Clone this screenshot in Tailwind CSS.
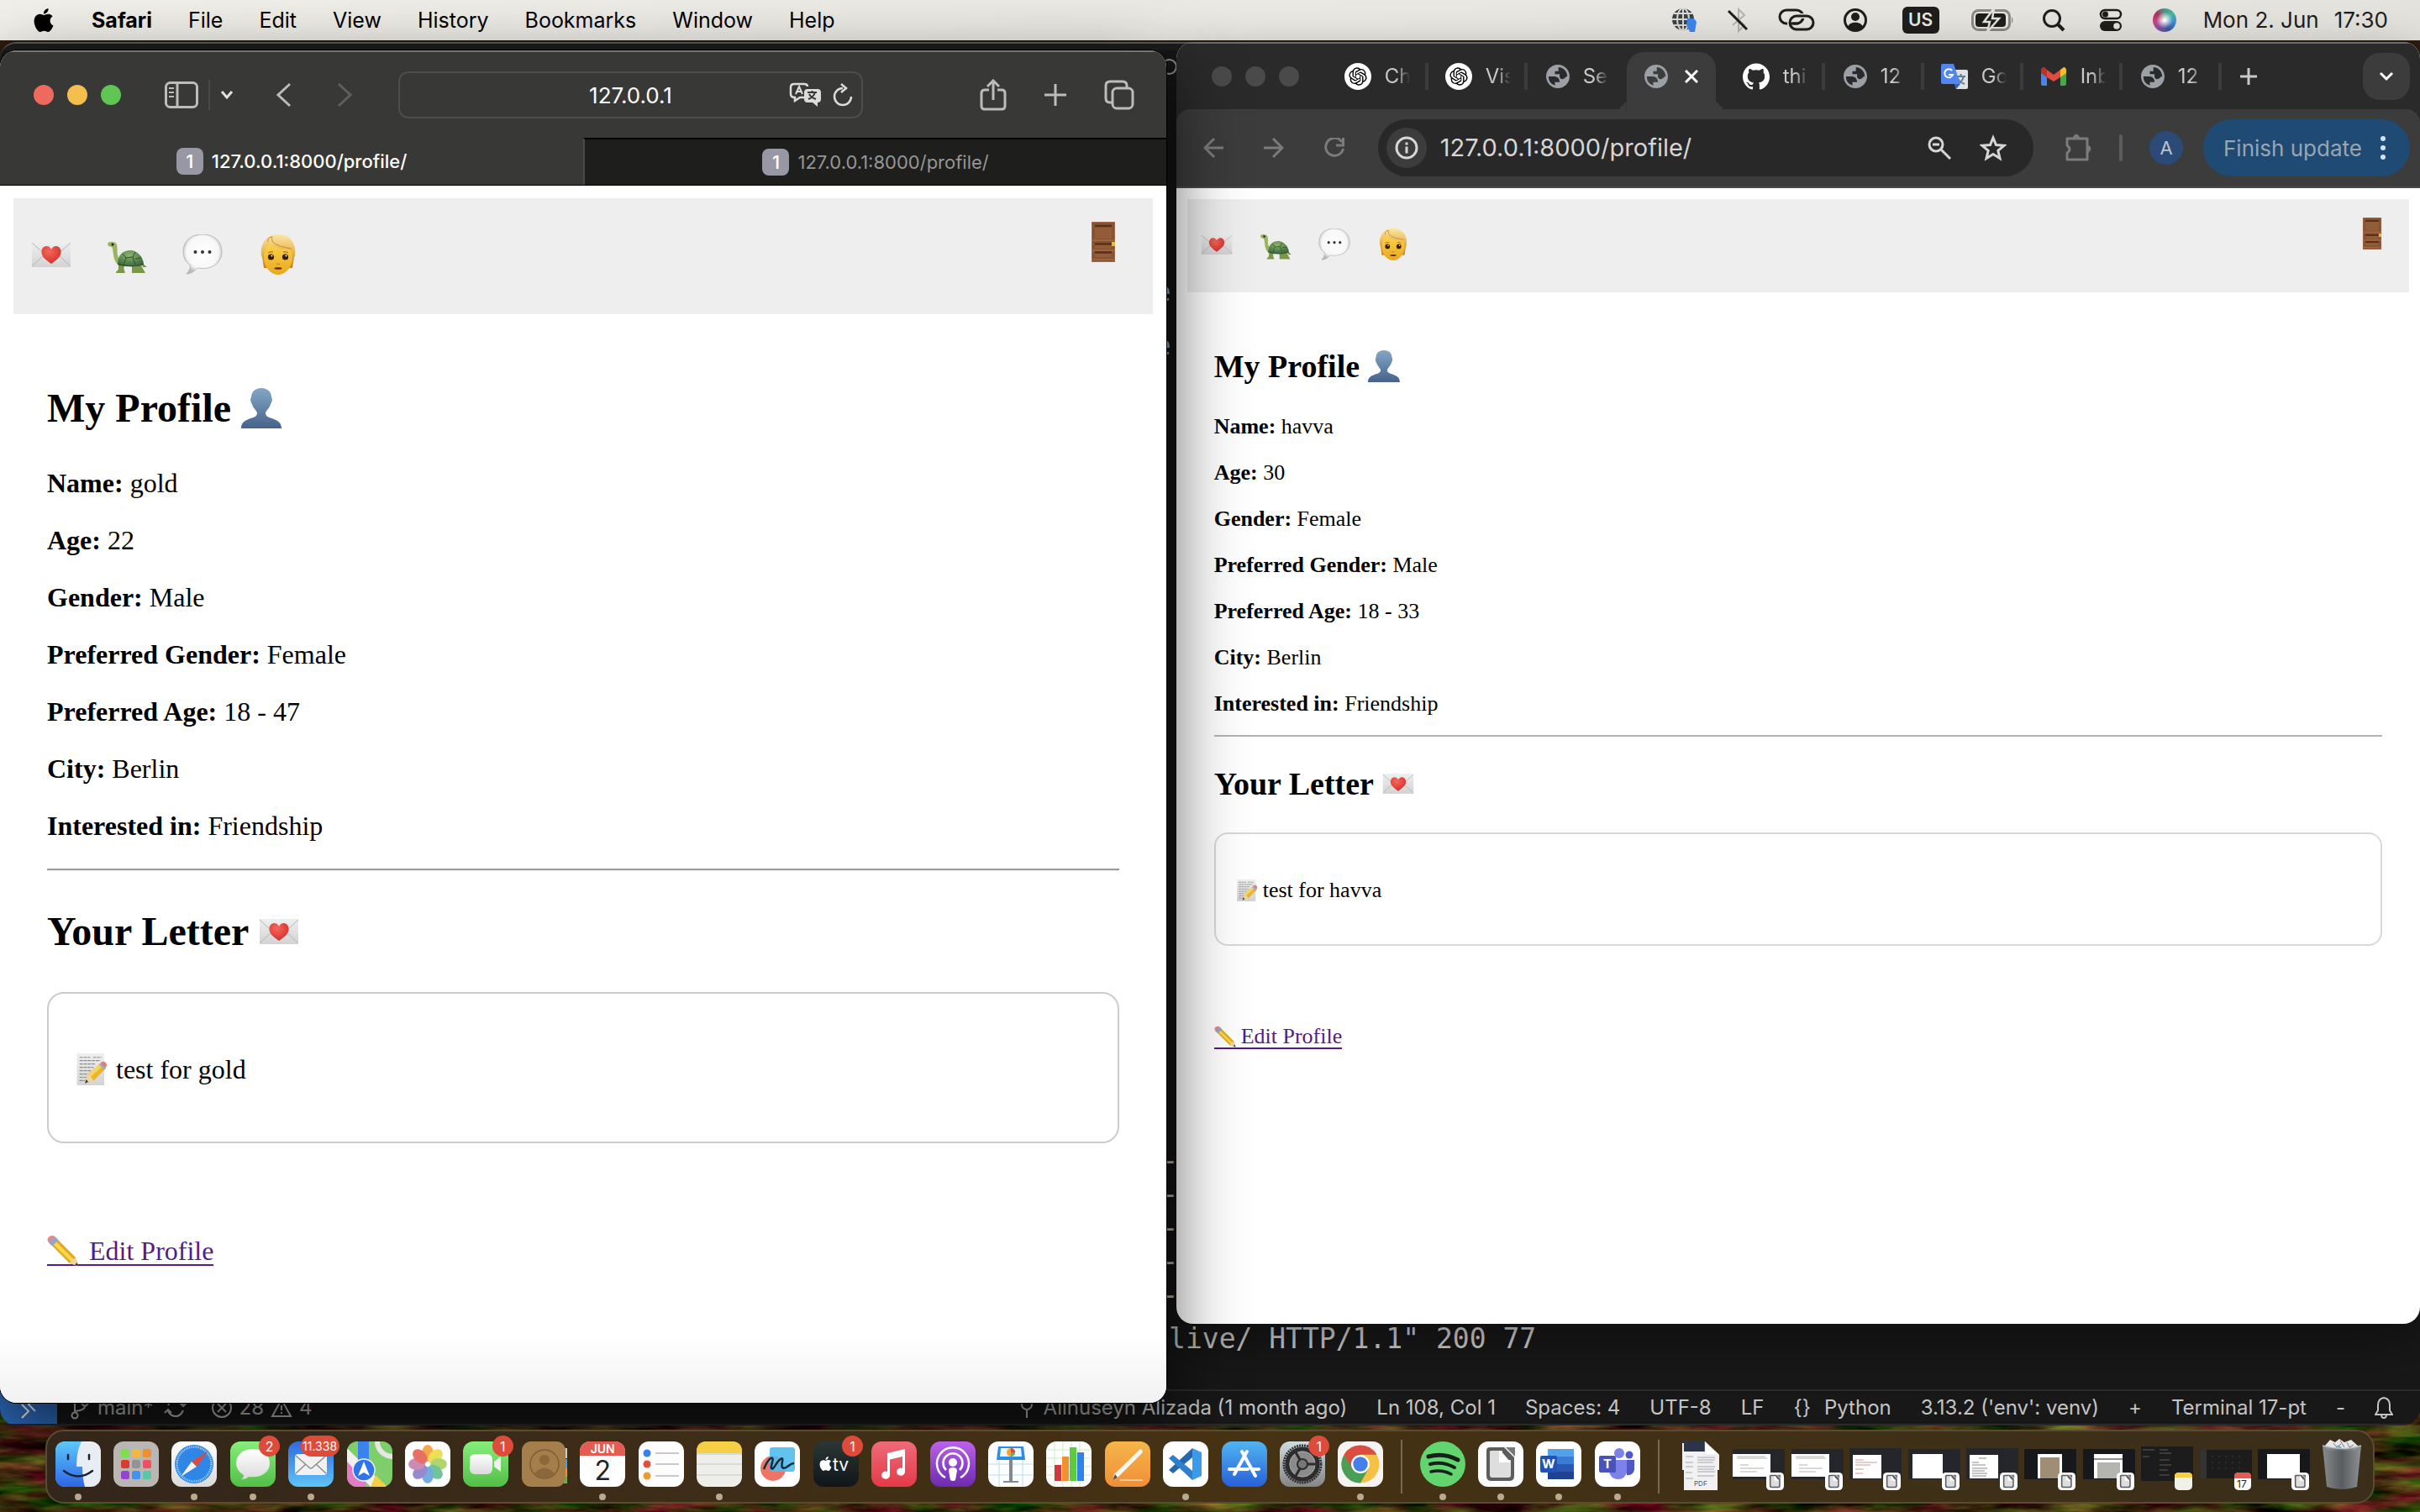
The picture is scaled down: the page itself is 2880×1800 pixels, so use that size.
<!DOCTYPE html>
<html lang="en">
<head>
<meta charset="utf-8">
<meta name="viewport" content="width=device-width, initial-scale=1">
<title>Desktop</title>
<script src="https://cdn.jsdelivr.net/npm/@tailwindcss/browser@4"></script>
</head>
<body class="bg-[#2b1d0e] font-[Inter,sans-serif]">

<svg class="absolute size-0" aria-hidden="true">
  <defs>
    <linearGradient id="g-paper" x1="0" y1="0" x2="0" y2="1"><stop offset="0" stop-color="#efefef"/><stop offset="1" stop-color="#d3d3d3"/></linearGradient>
    <radialGradient id="g-heart" cx=".4" cy=".3" r=".8"><stop offset="0" stop-color="#f5675a"/><stop offset="1" stop-color="#cf2a25"/></radialGradient>
    <radialGradient id="g-shell" cx=".45" cy=".3" r=".8"><stop offset="0" stop-color="#8db46c"/><stop offset="1" stop-color="#2f5c35"/></radialGradient>
    <radialGradient id="g-bubble" cx=".5" cy=".45" r=".55"><stop offset="0" stop-color="#fff"/><stop offset=".75" stop-color="#f7f7f7"/><stop offset="1" stop-color="#b9b9b9"/></radialGradient>
    <linearGradient id="g-face" x1="0" y1="0" x2="0" y2="1"><stop offset="0" stop-color="#fdd64c"/><stop offset="1" stop-color="#e9a81f"/></linearGradient>
    <linearGradient id="g-hair" x1="0" y1="0" x2="0" y2="1"><stop offset="0" stop-color="#fbe08a"/><stop offset="1" stop-color="#c97f16"/></linearGradient>
    <linearGradient id="g-fringe" x1="0" y1="0" x2="0" y2="1"><stop offset="0" stop-color="#fbe7a6"/><stop offset="1" stop-color="#e3a63a"/></linearGradient>
    <linearGradient id="g-bust" x1="0" y1="0" x2="0" y2="1"><stop offset="0" stop-color="#84a7c6"/><stop offset="1" stop-color="#46628a"/></linearGradient>
    <linearGradient id="g-green" x1="0" y1="0" x2="0" y2="1"><stop offset="0" stop-color="#86ee7b"/><stop offset="1" stop-color="#53bf47"/></linearGradient>
    <linearGradient id="g-mail" x1="0" y1="0" x2="0" y2="1"><stop offset="0" stop-color="#3069e0"/><stop offset="1" stop-color="#5fc4f8"/></linearGradient>
    <linearGradient id="g-finder" x1="0" y1="0" x2="0" y2="1"><stop offset="0" stop-color="#5cc8f9"/><stop offset="1" stop-color="#2f66e6"/></linearGradient>
    <linearGradient id="g-white" x1="0" y1="0" x2="0" y2="1"><stop offset="0" stop-color="#fff"/><stop offset="1" stop-color="#dadada"/></linearGradient>
    <linearGradient id="g-music" x1="0" y1="0" x2="0" y2="1"><stop offset="0" stop-color="#ef6a79"/><stop offset="1" stop-color="#e43a46"/></linearGradient>
    <linearGradient id="g-pod" x1="0" y1="0" x2="0" y2="1"><stop offset="0" stop-color="#bb62ea"/><stop offset="1" stop-color="#6d2bb0"/></linearGradient>
    <linearGradient id="g-pages" x1="0" y1="0" x2="0" y2="1"><stop offset="0" stop-color="#f6b54a"/><stop offset="1" stop-color="#ef8f36"/></linearGradient>
    <linearGradient id="g-store" x1="0" y1="0" x2="0" y2="1"><stop offset="0" stop-color="#51b5f2"/><stop offset="1" stop-color="#2860d8"/></linearGradient>
    <linearGradient id="g-gear" x1="0" y1="0" x2="0" y2="1"><stop offset="0" stop-color="#cfdbe2"/><stop offset="1" stop-color="#858585"/></linearGradient>
    <linearGradient id="g-trash" x1="0" y1="0" x2="1" y2="0"><stop offset="0" stop-color="#8d9296"/><stop offset=".5" stop-color="#5b6064"/><stop offset="1" stop-color="#94999d"/></linearGradient>
    <linearGradient id="g-tv" x1="0" y1="0" x2="0" y2="1"><stop offset="0" stop-color="#2b3735"/><stop offset="1" stop-color="#10151a"/></linearGradient>
    <filter id="grain" x="0" y="0" width="100%" height="100%" color-interpolation-filters="sRGB"><feTurbulence type="fractalNoise" baseFrequency=".012 .07" numOctaves="5" seed="7"/><feColorMatrix values=".9 0 0 0 -.22  .4 .7 0 0 -.38  .3 0 0 0 -.1  0 0 0 0 1"/></filter>

    <symbol id="e-letter" viewBox="0 0 48 48"><rect x="1" y="9" width="46" height="30" rx="1" fill="url(#g-paper)"/><path d="M1 38l16-15M47 38L31 23M1 10l19 17q4 3 8 0l19-17" fill="none" stroke="#b4b4b4"/><path d="M24 35C15 29 12 25 12.500 20c.8-7 9-8 11.500-2 2.500-6 10.700-5 11.500 2C36 25 33 29 24 35z" fill="url(#g-heart)"/></symbol>
    <symbol id="e-turtle" viewBox="0 0 48 48"><path d="M1 11c2-3 9-3 11 1 1 4 0 8 1 13l5 9-4 3C6 30 9 20 6 15c-2 0-5-1-5-4z" fill="#9bb45f"/><circle cx="7" cy="12" r="1.500" fill="#1c1c10"/><path d="M14 34l7 1-1 11h-9c0-3 3-2 3-6zM30 37h11l5 9H30zM42 34l6 5h-5zM20 40l2 6h-5z" fill="#7b9847"/><path d="M13 36C13 24 20 19 28 19s15 7 16 16c0 3-24 5-31 1z" fill="url(#g-shell)"/><path d="M20 36l3-8-4-5M23 28l8-1 3-6M31 27l3 9M34 29l7-1M13 35q16 5 31 1" fill="none" stroke="#2c5230" stroke-width="1"/></symbol>
    <symbol id="e-bubble" viewBox="0 0 48 48"><path d="M24 0C10 0 1 8 1 20c0 8 3 13 8 16 1 4-1 8-4 11 6 0 10-4 13-7l6 .6c14 0 23-8 23-20S38 0 24 0z" fill="url(#g-bubble)" stroke="#a9a9a9" stroke-width=".7"/><g fill="#333"><circle cx="15.500" cy="21" r="2"/><circle cx="24" cy="21" r="2"/><circle cx="32.500" cy="21" r="2"/></g></symbol>
    <symbol id="e-person" viewBox="0 0 48 48"><path d="M24 0C12 0 4 9 4 21l3 19h34l3-19C44 9 36 0 24 0z" fill="url(#g-hair)"/><path d="M24 8C13 8 7 15 7 27c0 12 8 21 17 21s17-9 17-21c0-12-6-19-17-19z" fill="url(#g-face)"/><path d="M4 26C2 8 13 0 24 0c14 0 22 10 20 27l-4-6c-1-2-3-3-6-3-10 0-18-3-22-9-1 6-4 7-5 13l-1 5z" fill="url(#g-fringe)"/><path d="M12 9q-1-6 5-6-4 10 23 14" fill="none" stroke="#c98a1c" stroke-width="1"/><circle cx="15.500" cy="27" r="3.600" fill="#3a1d08"/><circle cx="32.500" cy="27" r="3.600" fill="#3a1d08"/><circle cx="16.500" cy="25.500" r="1" fill="#fff"/><circle cx="33.500" cy="25.500" r="1" fill="#fff"/><path d="M12 22q3-2 6-1M30 21q3-1 6 1" stroke="#9c6515" fill="none"/><path d="M22 35q2 1 4 0" stroke="#b97a14" fill="none"/><ellipse cx="24" cy="40.500" rx="4.500" ry="1.300" fill="#5e2a10"/></symbol>
    <symbol id="e-door" viewBox="0 0 48 48"><rect x="10" width="28" height="48" fill="#a3694a"/><rect x="11" y="1" width="26" height="46" fill="#87522f"/><path d="M14 4h20v16H14zM14 26h20v6H14zM14 36h20v6H14z" fill="#935c39"/><path d="M14 5h20M14 26.500h20M14 36.500h20" stroke="#55301b" stroke-width="2.500"/><path d="M11 22h26M11 34h26M11 45h26" stroke="#a56a48" stroke-width="1.500"/><path d="M34 24h4v5h-4z" fill="#e0bf3e"/></symbol>
    <symbol id="e-bust" viewBox="0 0 48 48"><path d="M24 0c-8 0-12 5-12 11-2 2 0 7 1 8 1 5 6 8 6 11 0 8-19 4-19 18h48c0-14-19-10-19-18 0-3 5-6 6-11 1-1 3-6 1-8C36 5 32 0 24 0z" fill="url(#g-bust)"/></symbol>
    <symbol id="e-memo" viewBox="0 0 48 48"><rect x="2" y="0" width="41" height="48" fill="url(#g-paper)"/><path d="M6 6h16M26 6h13M6 11h31M6 16h24M6 21h21M6 26h17M6 31h12M6 36h10M6 41h8" stroke="#8d8d8d" stroke-width="1.500" stroke-dasharray="5 1"/><path d="M14 45l5-14 18-16 9 7-19 19z" fill="#e8b52c"/><path d="M19 31l18-16 5 3-19 17z" fill="#f6d660"/><path d="M14 45l5-14 4 4 4 6z" fill="#f0d5a0"/><path d="M14 45l2-6 3 4z" fill="#333"/><path d="M37 15l2-2q3-2 6 1t1 6l-2 2z" fill="#dd7f83"/><path d="M35 17l2-2 8 7-2 3z" fill="#8fb1cf"/></symbol>
    <symbol id="e-pencil" viewBox="0 0 48 48"><path d="M14 5l29 29 4 13-13-4L5 14z" fill="#e3a924"/><path d="M11 8l29 29-3 4L7 12z" fill="#f9d84c"/><path d="M43 34l4 13-13-4 3-5z" fill="#f0d5a0"/><path d="M47 47l-5-2 3-3z" fill="#222"/><path d="M2 11q-3-5 1-8t8-1l4 4-9 9z" fill="#e28a8b"/><path d="M12 3l5 5-9 9-5-5z" fill="#8fa9c4"/></symbol>

    <symbol id="i-apple" viewBox="0 0 24 24"><path fill="currentColor" d="M12.152 6.896c-.948 0-2.415-1.078-3.960-1.040-2.040.027-3.910 1.183-4.961 3.014-2.117 3.675-.546 9.103 1.519 12.090 1.013 1.454 2.208 3.090 3.792 3.039 1.520-.065 2.090-.987 3.935-.987 1.831 0 2.350.987 3.960.948 1.637-.026 2.676-1.480 3.676-2.948 1.156-1.688 1.636-3.325 1.662-3.415-.039-.013-3.182-1.221-3.220-4.857-.026-3.040 2.480-4.494 2.597-4.559-1.429-2.090-3.623-2.324-4.390-2.376-2-.156-3.675 1.090-4.610 1.090zM15.530 3.830c.843-1.012 1.400-2.427 1.245-3.830-1.207.052-2.662.805-3.532 1.818-.780.896-1.454 2.338-1.273 3.714 1.338.104 2.715-.688 3.559-1.701"/></symbol>
    <symbol id="i-gpt" viewBox="-6 -6 36 36"><circle cx="12" cy="12" r="18" fill="#fff"/><path d="M22.2819 9.8211a5.9847 5.9847 0 0 0-.5157-4.9108 6.0462 6.0462 0 0 0-6.5098-2.9A6.0651 6.0651 0 0 0 4.9807 4.1818a5.9847 5.9847 0 0 0-3.9977 2.9 6.0462 6.0462 0 0 0 .7427 7.0966 5.98 5.98 0 0 0 .511 4.9107 6.051 6.051 0 0 0 6.5146 2.9001A5.9847 5.9847 0 0 0 13.2599 24a6.0557 6.0557 0 0 0 5.7718-4.2058 5.9894 5.9894 0 0 0 3.9977-2.9001 6.0557 6.0557 0 0 0-.7475-7.0729zm-9.022 12.6081a4.4755 4.4755 0 0 1-2.8764-1.0408l.1419-.0804 4.7783-2.7582a.7948.7948 0 0 0 .3927-.6813v-6.7369l2.02 1.1686a.071.071 0 0 1 .038.052v5.5826a4.504 4.504 0 0 1-4.4945 4.4944zm-9.6607-4.1254a4.4708 4.4708 0 0 1-.5346-3.0137l.142.0852 4.783 2.7582a.7712.7712 0 0 0 .7806 0l5.8428-3.3685v2.3324a.0804.0804 0 0 1-.0332.0615L9.74 19.9502a4.4992 4.4992 0 0 1-6.1408-1.6464zM2.3408 7.8956a4.485 4.485 0 0 1 2.3655-1.9728V11.6a.7664.7664 0 0 0 .3879.6765l5.8144 3.3543-2.0201 1.1685a.0757.0757 0 0 1-.071 0l-4.8303-2.7865A4.504 4.504 0 0 1 2.3408 7.872zm16.5963 3.8558L13.1038 8.364 15.1192 7.2a.0757.0757 0 0 1 .071 0l4.8303 2.7913a4.4944 4.4944 0 0 1-.6765 8.1042v-5.6772a.79.79 0 0 0-.407-.667zm2.0107-3.0231l-.142-.0852-4.7735-2.7818a.7759.7759 0 0 0-.7854 0L9.409 9.2297V6.8974a.0662.0662 0 0 1 .0284-.0615l4.8303-2.7866a4.4992 4.4992 0 0 1 6.6802 4.66zM8.3065 12.863l-2.02-1.1638a.0804.0804 0 0 1-.038-.0567V6.0742a4.4992 4.4992 0 0 1 7.3757-3.4537l-.142.0805L8.704 5.459a.7948.7948 0 0 0-.3927.6813zm1.0976-2.3654l2.602-1.4998 2.6069 1.4998v2.9994l-2.5974 1.4997-2.6067-1.4997Z"/></symbol>
    <symbol id="i-world" viewBox="2 2 20 20"><path fill="#9aa0a6" d="M12 2C6.480 2 2 6.480 2 12s4.480 10 10 10 10-4.480 10-10S17.520 2 12 2zM4 12h4.400c3.400 0 5.100 1.700 5.100 4.900H9.500v2.700A8 8 0 0 1 4 12zm8.500-7.900V7.500h-3V10h4v2.500c.5 1.800 2.200 2 3.500 1.500 1.200-.5 1.500-2 3-2 0-4-3-7.600-7.500-7.900z" fill-rule="evenodd"/></symbol>
    <symbol id="i-github" viewBox="0 0 24 24"><path fill="#fff" d="M12 .297c-6.630 0-12 5.373-12 12 0 5.303 3.438 9.800 8.205 11.385.600.113.820-.258.820-.577 0-.285-.010-1.040-.015-2.040-3.338.724-4.042-1.610-4.042-1.610C4.422 18.070 3.633 17.700 3.633 17.700c-1.087-.744.084-.729.084-.729 1.205.084 1.838 1.236 1.838 1.236 1.070 1.835 2.809 1.305 3.495.998.108-.776.417-1.305.760-1.605-2.665-.300-5.466-1.332-5.466-5.930 0-1.310.465-2.380 1.235-3.220-.135-.303-.540-1.523.105-3.176 0 0 1.005-.322 3.300 1.230.960-.267 1.980-.399 3-.405 1.020.006 2.040.138 3 .405 2.280-1.552 3.285-1.230 3.285-1.230.645 1.653.240 2.873.120 3.176.765.840 1.230 1.910 1.230 3.220 0 4.610-2.805 5.625-5.475 5.920.420.360.810 1.096.810 2.220 0 1.606-.015 2.896-.015 3.286 0 .315.210.690.825.570C20.565 22.092 24 17.592 24 12.297c0-6.627-5.373-12-12-12"/></symbol>
    <symbol id="i-doc" viewBox="0 0 54 54"><rect width="54" height="54" rx="12" fill="#fcfcfc"/><path d="M14 7h17l12 12v22q0 6-6 6H16q-6 0-6-6V11q0-4 4-4z" fill="#5d5d5d"/><path d="M15 11h14v11h10v18q0 3-3 3H17q-3 0-3-3V12z" fill="#dedede"/><path d="M25 11v14h14L27 11z" fill="#fff"/><path d="M33 7h11v11z" fill="#777"/></symbol>
  </defs>
</svg>

<div class="relative flex min-h-screen flex-col overflow-hidden">

  <!-- Wallpaper -->
  <div class="absolute inset-x-0 bottom-0 h-40 bg-[#2b1d0e]">
    <svg class="size-full" aria-hidden="true"><rect width="100%" height="100%" filter="url(#grain)"/></svg>
  </div>

  <!-- Menu bar -->
  <header class="relative flex h-12 items-center justify-between bg-linear-to-r from-[#f1f0ea] to-[#e4e2dc] px-[38px] text-[25px] leading-8 text-black">
    <nav class="flex items-center gap-[43px]" aria-label="Menu bar">
      <button aria-label="Apple menu"><svg class="h-[30px] w-7"><use href="#i-apple"/></svg></button>
      <button class="font-bold">Safari</button>
      <button>File</button>
      <button>Edit</button>
      <button>View</button>
      <button>History</button>
      <button>Bookmarks</button>
      <button>Window</button>
      <button>Help</button>
    </nav>
    <div class="flex items-center text-[#1e1e1c]">
      <svg class="mr-8 size-8" viewBox="0 0 32 32"><circle cx="15" cy="15" r="13" fill="#3d4247"/><g stroke="#d8d8d4" stroke-width="2" fill="none"><path d="M2 15h26M4 8h22M4 22h22M15 2v26"/><ellipse cx="15" cy="15" rx="7" ry="13"/></g><path d="M20 14h8l3 4-2 12h-6l-4-9z" fill="#3d85f0"/></svg>
      <svg class="mr-8 size-8" viewBox="0 0 32 32" fill="none" stroke-width="2"><path d="M10 9l14 13-7 7V3l7 7L10 22" stroke="#b5b3ae"/><path d="M5 5l22 22" stroke="#1e1e1c" stroke-width="3"/></svg>
      <svg class="mr-8 h-8 w-11" viewBox="0 0 44 32" fill="none" stroke="currentColor" stroke-width="3"><rect x="2" y="4" width="28" height="16" rx="8"/><rect x="14" y="11" width="28" height="16" rx="8" stroke="#e6e4de" stroke-width="6"/><rect x="14" y="11" width="28" height="16" rx="8"/><path d="M14 20h10"/></svg>
      <svg class="mr-10 size-8" viewBox="0 0 32 32"><circle cx="16" cy="16" r="12.500" fill="none" stroke="currentColor" stroke-width="3"/><circle cx="16" cy="12" r="5" fill="currentColor"/><path d="M7 24c2-7 16-7 18 0-5 5-13 5-18 0z" fill="currentColor"/></svg>
      <span class="mr-[38px] flex h-8 w-11 items-center justify-center rounded-md bg-[#1e1e1c] text-[21px] font-semibold text-[#eceae4]">US</span>
      <svg class="mr-8 h-8 w-[52px]" viewBox="0 0 52 32"><rect x="1.500" y="4.500" width="44" height="23" rx="7" fill="none" stroke="#8a8984" stroke-width="3"/><path d="M48 12q3 4 0 8" fill="#8a8984"/><rect x="5" y="8" width="36" height="16" rx="4" fill="#1e1e1c"/><path d="M27 2L15 18h7l-3 12 14-16h-8z" fill="#1e1e1c" stroke="#e6e4de" stroke-width="2.500"/></svg>
      <svg class="mr-10 size-7" viewBox="0 0 28 28" fill="none" stroke="currentColor" stroke-width="3"><circle cx="12" cy="12" r="9.500"/><path d="M19 19l7 7" stroke-width="4"/></svg>
      <svg class="mr-9 size-7" viewBox="0 0 28 28"><rect x="2" y="2" width="24" height="10" rx="5" fill="none" stroke="currentColor" stroke-width="2.500"/><circle cx="7.500" cy="7" r="3.500" fill="currentColor"/><rect x="1" y="15" width="26" height="12" rx="6" fill="currentColor"/><circle cx="21" cy="21" r="3.800" fill="#e4e2dc"/></svg>
      <span class="mr-8 size-7 rounded-full bg-[radial-gradient(circle_at_50%_50%,#fff_5%,transparent_50%),conic-gradient(#4a9a87,#49b598,#3c8fd8,#3a5a9a,#7c52a8,#c44a85,#b0305a,#4a9a87)]"></span>
      <time class="flex gap-[18px] text-[26px]"><span>Mon 2. Jun</span><span>17:30</span></time>
    </div>
  </header>

  <main class="relative flex-1">

    <!-- Code editor window -->
    <section class="absolute inset-x-0 top-0.5 bottom-0 flex flex-col justify-end overflow-hidden rounded-[20px] border-t-2 border-[#5c5c5c] bg-[#181818] text-[#c4c4c4]" aria-label="Code editor">
      <div class="absolute inset-x-0 top-0 h-2 bg-[#1d1d1d]"></div>
      <div class="absolute top-[18px] left-[48%] size-[19px] rounded-full border-2 border-[#999]"></div>
      <div class="absolute top-[276px] left-[47.7%] font-['DejaVu_Sans_Mono',monospace] text-[33px] leading-10 text-[#8fc8f0]">
        <p class="mb-6">e</p><p class="mb-32">e</p><p class="mb-36 text-[#d8a088]">)</p><p class="text-[#d8a088]">:</p>
      </div>
      <div class="absolute top-[1310px] left-[48%] font-['DejaVu_Sans_Mono',monospace] text-[33px] leading-10 text-[#ccc]">
        <p>-</p><p>-</p><p>-</p><p>-</p><p>-</p>
      </div>
      <div class="mr-7 flex-1 border-r border-black"></div>
      <pre class="h-[85px] pl-[48.3%] font-['DejaVu_Sans_Mono',monospace] text-[33px] leading-[50px] text-[#cfcfcf]">live/ HTTP/1.1" 200 77</pre>
      <footer class="flex h-[43px] items-center justify-between border-y-2 border-[#2b2b2b] pr-8 text-2xl">
        <div class="flex h-full items-center">
          <button class="mr-4 flex h-full w-[68px] items-center justify-center bg-[#2f6fc4] text-white" aria-label="Remote"><svg class="h-7 w-6" viewBox="0 0 24 28" fill="none" stroke="currentColor" stroke-width="2"><path d="M4 10l8 8-8 8M20 2l-8 8 8 8"/></svg></button>
          <svg class="mr-2.5 h-7 w-[22px]" viewBox="0 0 22 28" fill="none" stroke="currentColor" stroke-width="2"><circle cx="5" cy="5" r="3.500"/><circle cx="5" cy="23" r="3.500"/><circle cx="17" cy="8" r="3.500"/><path d="M5 9v10M17 12q0 5-12 6"/></svg>
          <span>main*</span>
          <svg class="mr-7 ml-3 size-7" viewBox="0 0 28 28" fill="none" stroke="currentColor" stroke-width="2"><path d="M5 11q3-7 9-7 6 0 9 6M23 17q-3 7-9 7-6 0-9-6M1 20l4-4 4 4M19 8l4 4 4-4"/></svg>
          <svg class="mr-2 size-[26px]" viewBox="0 0 26 26" fill="none" stroke="currentColor" stroke-width="2"><circle cx="13" cy="13" r="11"/><path d="M8 8l10 10M18 8L8 18"/></svg>28
          <svg class="mx-2 size-[26px]" viewBox="0 0 26 26" fill="none" stroke="currentColor" stroke-width="2"><path d="M13 3l11 20H2zM13 10v6M13 18v2"/></svg>4
        </div>
        <div class="flex items-center gap-[35px]">
          <span class="flex items-center gap-3"><svg class="h-7 w-4" viewBox="0 0 16 28" fill="none" stroke="currentColor" stroke-width="2"><circle cx="8" cy="10" r="6"/><path d="M8 16v10"/></svg>Alihuseyn Alizada (1 month ago)</span>
          <span>Ln 108, Col 1</span><span>Spaces: 4</span><span>UTF-8</span><span>LF</span>
          <span class="flex gap-4"><span>{}</span>Python</span>
          <span>3.13.2 ('env': venv)</span><span>+</span><span>Terminal 17-pt</span><span>-</span>
          <svg class="h-7 w-[22px]" viewBox="0 0 22 28" fill="none" stroke="currentColor" stroke-width="2"><path d="M1 22h20l-3-5v-6q0-8-7-9-7 1-7 9v6zM8 22q0 4 3 4t3-4"/></svg>
        </div>
      </footer>
    </section>

    <!-- Chrome window -->
    <section class="absolute top-0.5 right-0 bottom-[121px] left-[48.6%] flex flex-col overflow-hidden rounded-[20px] bg-white shadow-[0_20px_60px_rgba(0,0,0,.4)]" aria-label="Chrome">
      <div class="flex h-20 items-center border-t-2 border-[#6c6c6c] bg-[#2a2a2a] text-2xl text-[#c9c9c9]">
        <div class="mr-9 ml-[42px] flex gap-4">
          <span class="size-6 rounded-full bg-[#4a4a4a]"></span><span class="size-6 rounded-full bg-[#4a4a4a]"></span><span class="size-6 rounded-full bg-[#4a4a4a]"></span>
        </div>
        <button class="flex h-8 w-[118px] items-center gap-4 border-r-4 border-[#3c3c3c] pl-[18px]"><svg class="size-8 shrink-0"><use href="#i-gpt"/></svg><span class="[mask-image:linear-gradient(to_right,black_14px,transparent_30px)]">Ch</span></button>
        <button class="flex h-8 w-[118px] items-center gap-4 border-r-4 border-[#3c3c3c] pl-5"><svg class="size-8 shrink-0"><use href="#i-gpt"/></svg><span class="[mask-image:linear-gradient(to_right,black_14px,transparent_30px)]">Vis</span></button>
        <button class="flex h-8 w-[118px] items-center gap-4 pl-[22px]"><svg class="size-7 shrink-0"><use href="#i-world"/></svg><span class="[mask-image:linear-gradient(to_right,black_14px,transparent_30px)]">Se</span></button>
        <button class="relative mr-3 flex h-17 w-[106px] items-center justify-center gap-5 self-end rounded-t-[20px] bg-[#3c3c3c] pb-2.5 text-white before:absolute before:bottom-0 before:-left-4 before:size-4 before:rounded-br-2xl before:shadow-[8px_8px_0_#3c3c3c] before:[clip-path:inset(0)] after:absolute after:-right-4 after:bottom-0 after:size-4 after:rounded-bl-2xl after:shadow-[-8px_8px_0_#3c3c3c] after:[clip-path:inset(0)]"><svg class="size-7"><use href="#i-world"/></svg><svg class="size-4" viewBox="0 0 16 16" stroke="currentColor" stroke-width="3"><path d="M1 1l14 14M15 1L1 15"/></svg></button>
        <button class="flex h-8 w-[118px] items-center gap-4 border-r-4 border-[#3c3c3c] pl-5"><svg class="size-8 shrink-0"><use href="#i-github"/></svg><span class="[mask-image:linear-gradient(to_right,black_14px,transparent_30px)]">thi</span></button>
        <button class="flex h-8 w-[118px] items-center gap-4 border-r-4 border-[#3c3c3c] pl-[22px]"><svg class="size-7 shrink-0"><use href="#i-world"/></svg><span class="[mask-image:linear-gradient(to_right,black_14px,transparent_34px)]">12</span></button>
        <button class="flex h-8 w-[118px] items-center gap-4 border-r-4 border-[#3c3c3c] pl-5"><svg class="size-8 shrink-0" viewBox="0 0 32 32"><path d="M12 8h18q2 0 2 2v19q0 2-2 2H18z" fill="#dfe1e4"/><path d="M18 16h11M23.500 13v3M27 16q-2 7-8 9M20 18q2 5 8 7" stroke="#5f7f90" stroke-width="2" fill="none"/><path d="M2 1h13l8 24H2q-2 0-2-2V3q0-2 2-2z" fill="#5186ec"/><path d="M16 25h7l-5 6z" fill="#3561c0"/><path d="M13 9a5 5 0 1 0 1 5h-5" fill="none" stroke="#fff" stroke-width="2"/></svg><span class="[mask-image:linear-gradient(to_right,black_14px,transparent_30px)]">Go</span></button>
        <button class="flex h-8 w-[118px] items-center gap-4 border-r-4 border-[#3c3c3c] pl-5"><svg class="h-[22px] w-8 shrink-0" viewBox="0 0 30 22"><path d="M0 6v14q0 2 2 2h5V10z" fill="#4a83ef"/><path d="M30 6v14q0 2-2 2h-5V10z" fill="#4aa450"/><path d="M23 3l4-3q3 0 3 4v3l-7 5z" fill="#f5bd2c"/><path d="M7 3v9l8 5 8-5V3l-8 6z" fill="#e04a3f"/><path d="M0 7V4q0-4 4-4l3 3v9z" fill="#b8322b"/></svg><span class="[mask-image:linear-gradient(to_right,black_14px,transparent_30px)]">Inb</span></button>
        <button class="flex h-8 w-[118px] items-center gap-4 border-r-4 border-[#3c3c3c] pl-[22px]"><svg class="size-7 shrink-0"><use href="#i-world"/></svg><span class="[mask-image:linear-gradient(to_right,black_14px,transparent_34px)]">12</span></button>
        <button class="ml-[22px]" aria-label="New tab"><svg class="size-5" viewBox="0 0 20 20" stroke="currentColor" stroke-width="3"><path d="M10 0v20M0 10h20"/></svg></button>
        <button class="mr-3 ml-auto flex size-14 items-center justify-center rounded-[20px] bg-[#3c3c3c] text-white" aria-label="Search tabs"><svg class="h-3 w-[18px]" viewBox="0 0 18 12" fill="none" stroke="currentColor" stroke-width="3"><path d="M2 2l7 7 7-7"/></svg></button>
      </div>
      <div class="bg-[#2a2a2a]">
      <div class="flex h-[94px] items-center rounded-t-2xl border-b-2 border-[#494949] bg-[#3c3c3c] pr-3 pl-8 text-[#7b7b7b]">
        <button class="mr-12" aria-label="Back"><svg class="size-6" viewBox="0 0 24 24" fill="none" stroke="currentColor" stroke-width="3"><path d="M24 12H2M13 1L2 12l11 11"/></svg></button>
        <button class="mr-12" aria-label="Forward"><svg class="size-6" viewBox="0 0 24 24" fill="none" stroke="currentColor" stroke-width="3"><path d="M0 12h22M11 1l11 11-11 11"/></svg></button>
        <button class="mr-10" aria-label="Reload"><svg class="size-6" viewBox="0 0 24 24" fill="none" stroke="currentColor" stroke-width="3"><path d="M21 5A10.500 10.500 0 1 0 22.500 13M22.500 0v9H14"/></svg></button>
        <div class="flex h-17 flex-1 items-center rounded-full bg-[#282828] pr-8 pl-2.5 text-[#d6d6d6]">
          <button class="mr-4 flex size-12 items-center justify-center rounded-full bg-[#3c3c3c]" aria-label="Site information"><svg class="size-7" viewBox="0 0 28 28" fill="none" stroke="currentColor" stroke-width="3"><circle cx="14" cy="14" r="12"/><path d="M14 12.500v8M14 7.500v3"/></svg></button>
          <input class="min-w-0 flex-1 bg-transparent text-[29px] outline-none" aria-label="Address" value="127.0.0.1:8000/profile/">
          <button class="mr-8" aria-label="Zoom"><svg class="size-8" viewBox="0 0 32 32" fill="none" stroke="currentColor" stroke-width="3"><circle cx="12" cy="12" r="8"/><path d="M18 18l11 11M8 12h8"/></svg></button>
          <button aria-label="Bookmark"><svg class="size-8" viewBox="0 0 32 32" fill="none" stroke="currentColor" stroke-width="3"><path d="M16 4l3.500 8.500 9.500.8-7.200 6 2.200 9.200-8-5-8 5 2.200-9.200-7.200-6 9.500-.8z"/></svg></button>
        </div>
        <button class="mr-8 ml-9" aria-label="Extensions"><svg class="h-9 w-[34px]" viewBox="0 0 34 36" fill="none" stroke="currentColor" stroke-width="3"><path d="M4 7h24v25H4V24q6-4 0-9z" stroke-linejoin="round"/><path d="M11 6q4-8 8 0zM29 15q6 3 0 9z" fill="currentColor" stroke-width="1"/></svg></button>
        <span class="mr-8 h-8 w-1 rounded-sm bg-[#5c5c5c]"></span>
        <button class="mr-6 flex size-10 items-center justify-center rounded-full bg-[#2b4a77] text-[22px] text-[#b9c4d2]">A</button>
        <button class="flex h-17 w-[246px] items-center justify-between rounded-full bg-[#1f4a73] pr-7 pl-6 text-[26px] text-[#9aa5af]">Finish update<svg class="h-7 w-2" viewBox="0 0 8 28" fill="#cfe4fb"><circle cx="4" cy="3" r="3"/><circle cx="4" cy="14" r="3"/><circle cx="4" cy="25" r="3"/></svg></button>
      </div>
      </div>
      <div class="flex-1 px-[13px] pt-[13px] font-['Liberation_Serif',serif] text-[26px] leading-[29px] text-black">
        <nav class="flex h-[111px] justify-between bg-[#eee] pr-[25px] pl-4">
          <div class="flex gap-8 pt-[35px]">
            <a href="#" class="size-[38px]" aria-label="Letters"><svg class="size-full"><use href="#e-letter"/></svg></a>
            <a href="#" class="size-[38px]" aria-label="Turtle"><svg class="size-full"><use href="#e-turtle"/></svg></a>
            <a href="#" class="size-[38px]" aria-label="Messages"><svg class="size-full"><use href="#e-bubble"/></svg></a>
            <a href="#" class="size-[38px]" aria-label="Profile"><svg class="size-full"><use href="#e-person"/></svg></a>
          </div>
          <a href="#" class="mt-[22px] size-[38px]" aria-label="Log out"><svg class="size-full"><use href="#e-door"/></svg></a>
        </nav>
        <article class="px-8 pt-[66px]">
          <h2 class="flex items-center gap-2.5 text-[38px] leading-[44px] font-bold">My Profile<svg class="size-[38px]"><use href="#e-bust"/></svg></h2>
          <div class="mt-[35px] mb-[23px] flex flex-col gap-[26px]">
            <p><strong>Name:</strong> havva</p>
            <p><strong>Age:</strong> 30</p>
            <p><strong>Gender:</strong> Female</p>
            <p><strong>Preferred Gender:</strong> Male</p>
            <p><strong>Preferred Age:</strong> 18 - 33</p>
            <p><strong>City:</strong> Berlin</p>
            <p><strong>Interested in:</strong> Friendship</p>
          </div>
          <hr class="border-t-2 border-[#b4b4b4]">
          <h2 class="mt-[34px] mb-9 flex items-center gap-2.5 text-[38px] leading-[44px] font-bold">Your Letter<svg class="size-[38px]"><use href="#e-letter"/></svg></h2>
          <div class="flex h-[135px] items-center gap-1.5 rounded-2xl border-2 border-[#d9d9d9] px-6 pt-0.5"><svg class="size-[26px]"><use href="#e-memo"/></svg>test for havva</div>
          <a href="#" class="mt-[95px] inline-flex items-center gap-1.5 border-b-2 border-[#551a8b] leading-[26px] text-[#551a8b]"><svg class="size-[26px]"><use href="#e-pencil"/></svg>Edit Profile</a>
        </article>
      </div>
    </section>

    <!-- Safari window -->
    <section class="absolute top-3 bottom-[27px] left-0 flex w-[48.2%] flex-col overflow-hidden rounded-[20px] bg-white shadow-[0_30px_90px_rgba(0,0,0,.7),0_0_0_1px_#000]" aria-label="Safari">
      <div class="flex h-[104px] items-center border-t-2 border-[#757573] bg-[#383837] pr-[38px] pl-10 text-[#bcbcbb]">
        <div class="mr-[52px] flex gap-4">
          <span class="size-6 rounded-full bg-[#ee6a5f]"></span><span class="size-6 rounded-full bg-[#f5bf4f]"></span><span class="size-6 rounded-full bg-[#61c554]"></span>
        </div>
        <button class="mr-3" aria-label="Sidebar"><svg class="h-8 w-10" viewBox="0 0 40 32" fill="none" stroke="currentColor" stroke-width="3"><rect x="1.500" y="1.500" width="37" height="29" rx="5"/><path d="M15 1v30"/><path d="M5 8h6M5 13h6M5 18h6" stroke-width="2"/></svg></button>
        <span class="h-9 w-0.5 bg-[#4a4a49]"></span>
        <button class="mr-[50px] ml-3" aria-label="Tab groups"><svg class="h-3 w-4" viewBox="0 0 16 12" fill="none" stroke="#e0e0e0" stroke-width="3"><path d="M2 2l6 7 6-7"/></svg></button>
        <button class="mr-[52px]" aria-label="Back"><svg class="h-[30px] w-5" viewBox="0 0 20 30" fill="none" stroke="currentColor" stroke-width="3"><path d="M17 2L3 15l14 13"/></svg></button>
        <button class="mr-[54px] text-[#5f5f5e]" aria-label="Forward"><svg class="h-[30px] w-5" viewBox="0 0 20 30" fill="none" stroke="currentColor" stroke-width="3"><path d="M3 2l14 13L3 28"/></svg></button>
        <div class="relative flex h-14 w-[553px] items-center rounded-xl border-2 border-[#4d4d4c] text-white">
          <input class="w-full bg-transparent text-center text-[26px] outline-none" aria-label="Address" value="127.0.0.1">
          <div class="absolute right-2.5 flex items-center gap-3 text-[#dcdcdc]">
            <svg class="h-[30px] w-10" viewBox="0 0 40 30" fill="none" stroke="currentColor" stroke-width="2.500"><path d="M19 18h-6l-6 4v-4q-5 0-5-4V6q0-4 4-4h12q4 0 4 3"/><path d="M8 14l4-9 4 9M9 11h6" stroke-width="2"/><path d="M22 8h12q4 0 4 4v8q0 4-4 4v5l-6-5h-6q-4 0-4-4v-8q0-4 4-4z" fill="currentColor" stroke="none"/><path d="M22 12h11M27.500 10v2M31 12q-2 6-8 8M24 14q2 4 8 6" stroke="#383837" stroke-width="2"/></svg>
            <svg class="h-7 w-6" viewBox="0 0 24 28" fill="none" stroke="currentColor" stroke-width="2.500"><path d="M12 6a10 10 0 1 0 10 10M10 1l6 5-6 5"/></svg>
          </div>
        </div>
        <div class="ml-auto flex items-center gap-11">
          <button aria-label="Share"><svg class="h-[38px] w-8" viewBox="0 0 32 38" fill="none" stroke="currentColor" stroke-width="3"><path d="M11 13H6q-4 0-4 4v15q0 4 4 4h20q4 0 4-4V17q0-4-4-4h-5M16 25V3M9 9l7-7 7 7"/></svg></button>
          <button aria-label="New tab"><svg class="size-7" viewBox="0 0 28 28" stroke="currentColor" stroke-width="3"><path d="M14 1v26M1 14h26"/></svg></button>
          <button aria-label="Tab overview"><svg class="size-9" viewBox="0 0 36 36" fill="none" stroke="currentColor" stroke-width="3"><rect x="10" y="10" width="24" height="24" rx="5"/><path d="M10 27H7q-5 0-5-5V7q0-5 5-5h15q5 0 5 5v3"/></svg></button>
        </div>
      </div>
      <div class="grid h-[57px] grid-cols-2 border-b border-black text-[22px]">
        <button class="flex items-center justify-center gap-2.5 bg-[#383837] font-medium text-white"><span class="flex size-8 items-center justify-center rounded-lg bg-[#9797a5] text-white">1</span>127.0.0.1:8000/profile/</button>
        <button class="flex items-center justify-center gap-2.5 border-t-2 border-l-2 border-t-black border-l-[#4a4a49] bg-[#1e1e1d] text-[#969695]"><span class="flex size-8 items-center justify-center rounded-lg bg-[#9797a5] font-medium text-white">1</span>127.0.0.1:8000/profile/</button>
      </div>
      <div class="flex-1 bg-[linear-gradient(to_top,#f1f1f1,#ffffff_80px)] px-4 pt-[15px] font-['Liberation_Serif',serif] text-[32px] leading-9 text-black">
        <nav class="flex h-[138px] justify-between bg-[#eee] pr-[35px] pl-[21px]">
          <div class="flex gap-[42px] pt-[43px]">
            <a href="#" class="size-12" aria-label="Letters"><svg class="size-full"><use href="#e-letter"/></svg></a>
            <a href="#" class="size-12" aria-label="Turtle"><svg class="size-full"><use href="#e-turtle"/></svg></a>
            <a href="#" class="size-12" aria-label="Messages"><svg class="size-full"><use href="#e-bubble"/></svg></a>
            <a href="#" class="size-12" aria-label="Profile"><svg class="size-full"><use href="#e-person"/></svg></a>
          </div>
          <a href="#" class="mt-7 size-12" aria-label="Log out"><svg class="size-full"><use href="#e-door"/></svg></a>
        </nav>
        <article class="px-10 pt-[84px]">
          <h2 class="flex items-center gap-3 text-5xl leading-14 font-bold">My Profile<svg class="size-12"><use href="#e-bust"/></svg></h2>
          <div class="mt-[43px] mb-[33px] flex flex-col gap-8">
            <p><strong>Name:</strong> gold</p>
            <p><strong>Age:</strong> 22</p>
            <p><strong>Gender:</strong> Male</p>
            <p><strong>Preferred Gender:</strong> Female</p>
            <p><strong>Preferred Age:</strong> 18 - 47</p>
            <p><strong>City:</strong> Berlin</p>
            <p><strong>Interested in:</strong> Friendship</p>
          </div>
          <hr class="border-t-2 border-b border-t-[#9a9a9a] border-b-[#ededed]">
          <h2 class="my-11 flex items-center gap-3 text-5xl leading-14 font-bold">Your Letter<svg class="size-12"><use href="#e-letter"/></svg></h2>
          <div class="flex h-[180px] items-center gap-2.5 rounded-[20px] border-2 border-[#ccc] px-8 pt-1"><svg class="size-[38px]"><use href="#e-memo"/></svg>test for gold</div>
          <a href="#" class="mt-[112px] inline-flex items-center gap-3 border-b-2 border-[#551a8b] leading-8 text-[#551a8b]"><svg class="-my-1 size-[38px]"><use href="#e-pencil"/></svg>Edit Profile</a>
        </article>
      </div>
    </section>
  </main>

  <!-- Dock -->
  <footer class="relative px-[54px] pt-[5px] pb-2.5">
    <div class="flex h-[88px] rounded-[22px] border-2 border-[#5a4b33] bg-linear-to-r from-[#33261a] via-[#463213] to-[#3a2e1a] px-0.5">
    <ul class="flex flex-23 [&>li]:relative [&>li]:flex [&>li]:flex-1 [&>li]:justify-center [&>li]:pt-3">
      <li><svg class="size-[54px]" viewBox="0 0 54 54"><rect width="54" height="54" rx="12" fill="#e8ecf3"/><path d="M12 0h19c-4 8-6 18-6 30h7c0 9 1 17 3 24H12Q0 54 0 42V12Q0 0 12 0z" fill="url(#g-finder)"/><path d="M10 35q17 13 34 0M15 16v5M40 16v5" fill="none" stroke="#16243a" stroke-width="2.500" stroke-linecap="round"/></svg><i class="absolute bottom-0.5 size-2 rounded-full bg-[#b8a98f]"></i></li>
      <li><svg class="size-[54px]" viewBox="0 0 54 54"><rect width="54" height="54" rx="12" fill="#b9b6b3"/><rect x="9" y="9" width="10" height="10" rx="2.500" fill="#7be04a"/><rect x="22" y="9" width="10" height="10" rx="2.500" fill="#f4b83c"/><rect x="35" y="9" width="10" height="10" rx="2.500" fill="#ee8f32"/><rect x="9" y="22" width="10" height="10" rx="2.500" fill="#d63c30"/><rect x="22" y="22" width="10" height="10" rx="2.500" fill="#909496"/><rect x="35" y="22" width="10" height="10" rx="2.500" fill="#ee4f63"/><rect x="9" y="35" width="10" height="10" rx="2.500" fill="#9444d2"/><rect x="22" y="35" width="10" height="10" rx="2.500" fill="#3e94f0"/><rect x="35" y="35" width="10" height="10" rx="2.500" fill="#59c8a0"/></svg></li>
      <li><svg class="size-[54px]" viewBox="0 0 54 54"><rect width="54" height="54" rx="12" fill="url(#g-white)"/><circle cx="27" cy="27" r="23" fill="#2f86e4"/><circle cx="27" cy="27" r="20.500" fill="none" stroke="#d8ecff" stroke-width="2.500" stroke-dasharray=".8 1.400"/><path d="M43 12L24 24l6 6z" fill="#e4463a"/><path d="M11 42l13-18 6 6z" fill="#f4f4f4"/></svg><i class="absolute bottom-0.5 size-2 rounded-full bg-[#b8a98f]"></i></li>
      <li><svg class="size-[54px]" viewBox="0 0 54 54"><rect width="54" height="54" rx="12" fill="url(#g-green)"/><path d="M27 9c-12 0-20 7-20 17 0 6 4 11 9 14 0 2-1 4-3 5 4 0 7-1 9-3 14 2 25-5 25-16S38 9 27 9z" fill="url(#g-white)"/></svg><span class="absolute top-[5px] left-[42px] flex size-[25px] items-center justify-center rounded-full bg-[#dd4b3a] text-base text-white">2</span><i class="absolute bottom-0.5 size-2 rounded-full bg-[#b8a98f]"></i></li>
      <li><svg class="size-[54px]" viewBox="0 0 54 54"><rect width="54" height="54" rx="12" fill="url(#g-mail)"/><rect x="8" y="15" width="38" height="25" rx="4" fill="#f1f1f1"/><path d="M9 17l16 14q2 2 4 0l16-14M9 38l12-11M45 38L33 27" fill="none" stroke="#8d8d8d" stroke-width="1.500"/></svg><span class="absolute top-[5px] left-[22px] flex h-[25px] w-[46px] items-center justify-center rounded-full bg-[#dd4b3a] text-sm text-white">11.338</span><i class="absolute bottom-0.5 size-2 rounded-full bg-[#b8a98f]"></i></li>
      <li><svg class="size-[54px] rounded-xl" viewBox="0 0 54 54"><rect width="54" height="54" fill="#7fce6c"/><path d="M0 20l22 12v22H0z" fill="#e17cc7"/><path d="M0 8l46 46H28L0 24z" fill="#f0f0ee"/><path d="M28 54l6-14 14 14z" fill="#f5ce45"/><path d="M36 0a18 18 0 0 0 18 18" fill="none" stroke="#e6e6e4" stroke-width="6"/><path d="M13 0h13v27H13z" fill="#3a82f0"/><circle cx="20" cy="34" r="13" fill="#2f74ea" stroke="#f1f1f1" stroke-width="1.500"/><path d="M20 24l7 17-7-4-7 4z" fill="#fff"/></svg></li>
      <li><svg class="size-[54px]" viewBox="0 0 54 54"><rect width="54" height="54" rx="12" fill="#fff"/><g opacity=".85"><ellipse cx="27" cy="14" rx="7" ry="10" fill="#f39a2b"/><ellipse cx="27" cy="14" rx="7" ry="10" fill="#ead93a" transform="rotate(45 27 27)"/><ellipse cx="27" cy="14" rx="7" ry="10" fill="#a4cf56" transform="rotate(90 27 27)"/><ellipse cx="27" cy="14" rx="7" ry="10" fill="#58b98c" transform="rotate(135 27 27)"/><ellipse cx="27" cy="14" rx="7" ry="10" fill="#5b9fd8" transform="rotate(180 27 27)"/><ellipse cx="27" cy="14" rx="7" ry="10" fill="#8676c4" transform="rotate(225 27 27)"/><ellipse cx="27" cy="14" rx="7" ry="10" fill="#c477a8" transform="rotate(270 27 27)"/><ellipse cx="27" cy="14" rx="7" ry="10" fill="#e5574a" transform="rotate(315 27 27)"/></g></svg></li>
      <li><svg class="size-[54px]" viewBox="0 0 54 54"><rect width="54" height="54" rx="12" fill="url(#g-green)"/><rect x="8" y="15" width="27" height="24" rx="6" fill="url(#g-white)"/><path d="M37 24l8-6v18l-8-6z" fill="#f0f0f0"/></svg><span class="absolute top-[5px] left-[42px] flex size-[25px] items-center justify-center rounded-full bg-[#dd4b3a] text-base text-white">1</span></li>
      <li><svg class="size-[54px]" viewBox="0 0 54 54"><path d="M50 8h4v12h-4z" fill="#ccc"/><path d="M50 21h4v11h-4z" fill="#4aa1dd"/><path d="M50 32h4v10h-4z" fill="#ef9337"/><path d="M50 42h4v8h-4z" fill="#57b94f"/><rect width="52" height="54" rx="11" fill="#a57f4b"/><circle cx="27" cy="27" r="17" fill="none" stroke="#7d5e34" stroke-width="1.500"/><circle cx="27" cy="22" r="6" fill="#8a683b"/><path d="M15 38q12-13 24 0-12 11-24 0z" fill="#8a683b"/></svg></li>
      <li><div class="flex size-[54px] flex-col items-center overflow-hidden rounded-xl bg-white text-[#222]"><span class="h-[17px] w-full bg-[#e35b52] text-center text-sm leading-[18px] font-semibold text-white">JUN</span><span class="text-[32px] leading-[35px]">2</span></div><i class="absolute bottom-0.5 size-2 rounded-full bg-[#b8a98f]"></i></li>
      <li><svg class="size-[54px]" viewBox="0 0 54 54"><rect width="54" height="54" rx="12" fill="#fdfdfd"/><path d="M20 14h28M20 27h28M20 41h28" stroke="#b9b9bd" stroke-width="1.500"/><circle cx="10" cy="14" r="4.500" fill="#3a7ff0"/><circle cx="10" cy="27" r="4.500" fill="#e2503f"/><circle cx="10" cy="41" r="4.500" fill="#ec9a34"/></svg></li>
      <li><svg class="size-[54px]" viewBox="0 0 54 54"><rect width="54" height="54" rx="12" fill="#eeeeea"/><path d="M0 14V12Q0 0 12 0h30q12 0 12 12v2z" fill="#f7cf46"/><path d="M0 15h54M0 27h54M0 40h54" stroke="#c9c9c4"/></svg><i class="absolute bottom-0.5 size-2 rounded-full bg-[#b8a98f]"></i></li>
      <li><svg class="size-[54px]" viewBox="0 0 54 54"><rect width="54" height="54" rx="12" fill="#fff"/><circle cx="22" cy="32" r="15" fill="#ee7465"/><rect x="18" y="7" width="30" height="29" rx="3" fill="#50bdee" opacity=".9"/><path d="M11 33C17 18 24 16 21 25c-3 9 0 10 4 3s10-11 8-4c-2 9 2 9 6 6 3-2 4-4 8-4" fill="none" stroke="#122b3c" stroke-width="2.500"/></svg></li>
      <li><svg class="size-[54px]" viewBox="0 0 54 54"><rect width="54" height="54" rx="12" fill="url(#g-tv)"/><use href="#i-apple" x="6" y="18" width="17" height="17" color="#fff"/><text x="23" y="35" fill="#fff" font-size="21" font-family="Inter">tv</text></svg><span class="absolute top-[5px] left-[42px] flex size-[25px] items-center justify-center rounded-full bg-[#dd4b3a] text-base text-white">1</span></li>
      <li><svg class="size-[54px]" viewBox="0 0 54 54"><rect width="54" height="54" rx="12" fill="url(#g-music)"/><path d="M19 14l21-5v27a5 4.500 0 1 1-3-4V18l-15 3.500V40a5 4.500 0 1 1-3-4z" fill="#fff"/></svg></li>
      <li><svg class="size-[54px]" viewBox="0 0 54 54"><rect width="54" height="54" rx="12" fill="url(#g-pod)"/><g fill="none" stroke="#fff" stroke-width="2.500"><path d="M18 43a19 19 0 1 1 18 0M19 34a11.500 11.500 0 1 1 16 0"/></g><circle cx="27" cy="25" r="5" fill="#fff"/><path d="M22 35q0-4 5-4t5 4l-2 11q-3 2-6 0z" fill="#fff"/></svg></li>
      <li><svg class="size-[54px]" viewBox="0 0 54 54"><rect width="54" height="54" rx="12" fill="#fcfdfe"/><path d="M0 27h54M0 40h54M13 20v34M41 20v34" stroke="#bddcf3"/><path d="M25 22h4v26h-4z" fill="#84898f"/><path d="M18 47h18v2H18z" fill="#84898f"/><path d="M12 6h30l2 16H10z" fill="#2e8be6"/><path d="M15 8h24l1 10H14z" fill="#eef6fd"/><circle cx="27" cy="13" r="5" fill="#f0a436"/><path d="M27 8v5h5a5 5 0 0 0-5-5z" fill="#de4444"/><path d="M27 13v5a5 5 0 0 0 5-5z" fill="#57b94f"/></svg></li>
      <li><svg class="size-[54px]" viewBox="0 0 54 54"><rect width="54" height="54" rx="12" fill="#fcfdfc"/><path d="M0 10h54M0 20h54M0 30h54M0 40h54M10 0v54M20 0v54M30 0v54M40 0v54" stroke="#cdebc9"/><path d="M10 28h8v19h-8z" fill="#cf3a40"/><path d="M19 18h8v29h-8z" fill="#f0912e"/><path d="M28 7h8v40h-8z" fill="#5ecb3e"/><path d="M37 13h8v34h-8z" fill="#3280ea"/></svg></li>
      <li><svg class="size-[54px]" viewBox="0 0 54 54"><rect width="54" height="54" rx="12" fill="url(#g-pages)"/><path d="M42 9q4 1 2 5L15 43l-6 3 2-7z" fill="#f7f5f2"/><path d="M9 46l3-7 3 4z" fill="#555"/><path d="M18 46h27" stroke="#fce1bb" stroke-width="1.500"/></svg></li>
      <li><svg class="size-[54px]" viewBox="0 0 54 54"><rect width="54" height="54" rx="12" fill="#fff"/><path d="M35 8v11L12 38l-5-4z" fill="#2567ac"/><path d="M35 46V35L12 16l-5 4z" fill="#2f80cc"/><path d="M35 8l11 5v28l-11 5z" fill="#399bea"/></svg><i class="absolute bottom-0.5 size-2 rounded-full bg-[#b8a98f]"></i></li>
      <li><svg class="size-[54px]" viewBox="0 0 54 54"><rect width="54" height="54" rx="12" fill="url(#g-store)"/><g stroke="#fff" stroke-width="4" stroke-linecap="round" fill="none"><path d="M30 12L15 39M24 12l16 29M9 33h22M38 33h6"/></g></svg></li>
      <li><svg class="size-[54px]" viewBox="0 0 54 54"><rect width="54" height="54" rx="12" fill="url(#g-gear)"/><circle cx="27" cy="27" r="22" fill="none" stroke="#2f2f2f" stroke-width="3" stroke-dasharray="2 1"/><circle cx="27" cy="27" r="18" fill="#8b8b8b" stroke="#2c2c2c" stroke-width="5"/><circle cx="27" cy="27" r="15" fill="none" stroke="#a4a4a4"/><path d="M27 27h16M27 27L19 13M27 27L19 41" stroke="#2c2c2c" stroke-width="3"/><circle cx="27" cy="27" r="6" fill="#777" stroke="#2c2c2c" stroke-width="2"/></svg><span class="absolute top-[5px] left-[42px] flex size-[25px] items-center justify-center rounded-full bg-[#dd4b3a] text-base text-white">1</span></li>
      <li><svg class="size-[54px]" viewBox="0 0 54 54"><rect width="54" height="54" rx="12" fill="#f6f4f3"/><circle cx="27" cy="27" r="22.500" fill="#f4c145"/><path d="M7.500 15.700A22.500 22.500 0 0 0 27 49.500L37 32l-18 1z" fill="#4a9f54"/><path d="M7.500 15.700a22.500 22.500 0 0 1 39 0H27L17 32z" fill="#da4d40"/><circle cx="27" cy="27" r="11" fill="#fff"/><circle cx="27" cy="27" r="8.700" fill="#4580ea"/></svg><i class="absolute bottom-0.5 size-2 rounded-full bg-[#b8a98f]"></i></li>
    </ul>
    <div class="mx-[13px] mt-2.5 h-16 w-0.5 bg-[#79694e]" role="separator"></div>
    <ul class="flex flex-4 [&>li]:relative [&>li]:flex [&>li]:flex-1 [&>li]:justify-center [&>li]:pt-3">
      <li><svg class="size-[54px]" viewBox="0 0 54 54"><circle cx="27" cy="27" r="27" fill="#62d56e"/><g fill="none" stroke="#15201a" stroke-linecap="round"><path d="M10 18q18-5 35 4" stroke-width="5"/><path d="M12 27q15-4 29 4" stroke-width="4"/><path d="M13 36q13-3 24 3" stroke-width="3.500"/></g></svg><i class="absolute bottom-0.5 size-2 rounded-full bg-[#b8a98f]"></i></li>
      <li><svg class="size-[54px]"><use href="#i-doc"/></svg><i class="absolute bottom-0.5 size-2 rounded-full bg-[#b8a98f]"></i></li>
      <li><svg class="size-[54px]" viewBox="0 0 54 54"><rect width="54" height="54" rx="12" fill="#fff"/><path d="M14 9h31v9H14z" fill="#52a0ea"/><path d="M14 18h31v9H14z" fill="#3b7bd6"/><path d="M14 27h31v9H14z" fill="#2a57b0"/><path d="M14 36h31v9H14z" fill="#1e4191"/><rect x="5" y="17" width="20" height="20" rx="2" fill="#2352b5"/><text x="7" y="32" fill="#fff" font-size="15" font-weight="700" font-family="Inter">W</text></svg><i class="absolute bottom-0.5 size-2 rounded-full bg-[#b8a98f]"></i></li>
      <li><svg class="size-[54px]" viewBox="0 0 54 54"><rect width="54" height="54" rx="12" fill="#fff"/><circle cx="41" cy="16" r="4.500" fill="#5059c9"/><path d="M34 22h13v12q-2 7-9 6z" fill="#4e57c4"/><circle cx="29" cy="14" r="6" fill="#7b83eb"/><path d="M17 22h21v14q-2 9-10 9-9 0-11-9z" fill="#7b83eb"/><rect x="5" y="17" width="20" height="20" rx="2" fill="#4a53bb"/><text x="10" y="32" fill="#fff" font-size="15" font-weight="700" font-family="Inter">T</text></svg><i class="absolute bottom-0.5 size-2 rounded-full bg-[#b8a98f]"></i></li>
    </ul>
    <div class="mx-3.5 mt-2.5 h-16 w-0.5 bg-[#79694e]" role="separator"></div>
    <ul class="flex flex-12 [&>li]:relative [&>li]:flex [&>li]:flex-1 [&>li]:justify-center [&>li]:pt-3">
      <li><svg class="-mt-px h-[60px] w-11" viewBox="0 0 44 60"><path d="M0 3h28l16 14v18h-2v24H2V35H0z" fill="#f1f1f1"/><path d="M2 0h25v13H2z" fill="#2b3448"/><path d="M27 1l17 16H27z" fill="#fff" stroke="#ccc" stroke-width=".5"/><path d="M4 19h9M4 26h9M4 31h9M4 38h8M18 20h21M18 23h21M18 26h19M18 31h21M18 34h20M18 37h21M18 42h20M4 45h9" stroke="#a5a8b0"/><text x="14" y="54" font-size="8" fill="#555" font-family="Inter">PDF</text></svg></li>
      <li><svg class="h-[60px] w-[62px]" viewBox="0 0 62 60"><path d="M0 9h62v36H0z" fill="#24262b"/><path d="M0 15h45v27H0z" fill="#fff"/><path d="M5 18h34M5 20h36M9 28h10M9 32h28M9 36h20" stroke="#b3b3b3"/><use href="#i-doc" x="40" y="37" width="21" height="21"/></svg></li>
      <li><svg class="h-[60px] w-[62px]" viewBox="0 0 62 60"><path d="M0 9h62v36H0z" fill="#24262b"/><path d="M0 15h45v27H0z" fill="#fff"/><path d="M5 18h34M5 20h36M9 28h10M9 32h28M9 36h20" stroke="#b3b3b3"/><use href="#i-doc" x="40" y="37" width="21" height="21"/></svg></li>
      <li><svg class="h-[60px] w-[62px]" viewBox="0 0 62 60"><path d="M0 8h62v37H0z" fill="#24262b"/><path d="M4 16h34v28H4z" fill="#fff"/><path d="M7 22h10M7 25h26M7 28h18M7 33h10M7 38h9" stroke="#cf9a9a"/><use href="#i-doc" x="40" y="37" width="21" height="21"/></svg></li>
      <li><svg class="h-[60px] w-[62px]" viewBox="0 0 62 60"><path d="M0 9h62v36H0z" fill="#24262b"/><path d="M5 15h36v29H5z" fill="#fff"/><use href="#i-doc" x="40" y="37" width="21" height="21"/></svg></li>
      <li><svg class="h-[60px] w-[62px]" viewBox="0 0 62 60"><path d="M0 8h62v37H0z" fill="#24262b"/><path d="M4 16h34v28H4z" fill="#fff"/><path d="M15 20h9M7 25h8M7 28h16M7 32h18M7 35h15M7 38h18M7 41h17" stroke="#8a8a8a"/><use href="#i-doc" x="40" y="37" width="21" height="21"/></svg></li>
      <li><svg class="h-[60px] w-[62px]" viewBox="0 0 62 60"><path d="M0 9h62v36H0z" fill="#17181b"/><path d="M16 15h29v29H16z" fill="#fff"/><path d="M19 19h23v25H19z" fill="#a08d75"/><use href="#i-doc" x="40" y="37" width="21" height="21"/></svg></li>
      <li><svg class="h-[60px] w-[62px]" viewBox="0 0 62 60"><path d="M0 9h62v36H0z" fill="#17181b"/><path d="M13 15h34v29H13z" fill="#fff"/><path d="M13 21h34" stroke="#222"/><path d="M17 25h27v19H17z" fill="#b5b5b0"/><use href="#i-doc" x="40" y="37" width="21" height="21"/></svg></li>
      <li><svg class="h-[60px] w-[62px]" viewBox="0 0 62 60"><path d="M0 6h62v41H0z" fill="#1c1c1c"/><path d="M2 10h14M22 10h10M22 14h14M2 18h8M22 22h12M22 28h14M22 34h10M22 40h12" stroke="#5b5b5b"/><rect x="40" y="37" width="21" height="21" rx="5" fill="#f1f1ec"/><path d="M40 43v-2q0-4 5-4h11q5 0 5 4v2z" fill="#f7cf46"/></svg></li>
      <li><svg class="h-[60px] w-[62px]" viewBox="0 0 62 60"><path d="M0 10h62v34H0z" fill="#1c1c1c"/><path d="M0 10h8v34H0z" fill="#333"/><path d="M14 18h40M14 25h40M14 32h40" stroke="#3e3e3e" stroke-dasharray="2 6"/><rect x="41" y="37" width="20" height="21" rx="5" fill="#fff"/><path d="M41 44v-3q0-4 5-4h10q5 0 5 4v3z" fill="#e35b52"/><text x="44" y="55" font-size="12" fill="#222" font-family="Inter">17</text></svg></li>
      <li><svg class="h-[60px] w-[62px]" viewBox="0 0 62 60"><path d="M0 9h62v36H0z" fill="#17181b"/><path d="M11 15h39v29H11z" fill="#fff"/><use href="#i-doc" x="40" y="37" width="21" height="21"/></svg></li>
      <li><svg class="-mt-1 h-[62px] w-12" viewBox="0 0 48 62"><path d="M3 10L10 2l6 3 5-4 6 4 8-3 9 8-4 5H8z" fill="#e6e7e8"/><path d="M14 6l4 5 5-4M30 5l3 6 5-3M22 3l5 8" stroke="#777" fill="none"/><path d="M18 8l6 3-3 2z" fill="#4aa7d9"/><path d="M1 9q23 7 46 0l-5 49q-18 6-36 0z" fill="url(#g-trash)" opacity=".93"/><path d="M1 9q23 7 46 0" fill="none" stroke="#b9bec2" stroke-width="1.500"/></svg></li>
    </ul>
    </div>
  </footer>
</div>
</body>
</html>
